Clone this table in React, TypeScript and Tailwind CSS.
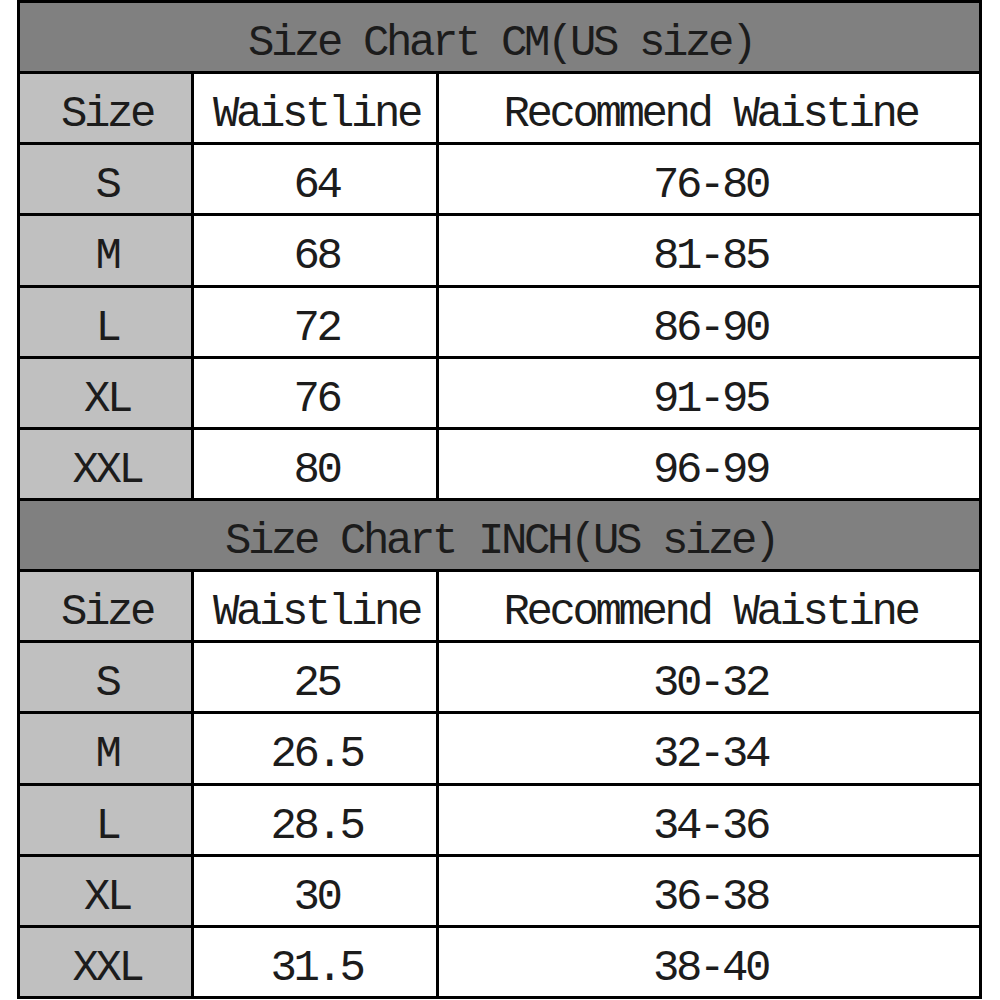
import React from "react";

type Row = { size: string; waist: string; rec: string };

const cmRows: Row[] = [
  { size: "S", waist: "64", rec: "76-80" },
  { size: "M", waist: "68", rec: "81-85" },
  { size: "L", waist: "72", rec: "86-90" },
  { size: "XL", waist: "76", rec: "91-95" },
  { size: "XXL", waist: "80", rec: "96-99" },
];

const inchRows: Row[] = [
  { size: "S", waist: "25", rec: "30-32" },
  { size: "M", waist: "26.5", rec: "32-34" },
  { size: "L", waist: "28.5", rec: "34-36" },
  { size: "XL", waist: "30", rec: "36-38" },
  { size: "XXL", waist: "31.5", rec: "38-40" },
];

function Cell({ children, tone = "bg-white" }: { children: React.ReactNode; tone?: string }) {
  return (
    <div className={`flex items-center justify-center pt-3 ${tone}`}>
      <span className="pl-[3px]">{children}</span>
    </div>
  );
}

function Section({ title, rows }: { title: string; rows: Row[] }) {
  return (
    <>
      <div className="col-span-3 flex items-center justify-center bg-[#808080] pt-3">
        <span className="pl-[3px]">{title}</span>
      </div>

      <Cell tone="bg-[#c0c0c0]">Size</Cell>
      <Cell>Waistline</Cell>
      <Cell>Recommend Waistine</Cell>

      {rows.map((r) => (
        <React.Fragment key={r.size}>
          <Cell tone="bg-[#c0c0c0]">{r.size}</Cell>
          <Cell>{r.waist}</Cell>
          <Cell>{r.rec}</Cell>
        </React.Fragment>
      ))}
    </>
  );
}

export default function App() {
  return (
    <div className="w-[1000px] h-[1000px] bg-white font-['Liberation_Mono','DejaVu_Sans_Mono',monospace]">
      <div className="ml-[17px] w-[965px] h-[999px] grid grid-cols-[171px_242px_540px] grid-rows-[repeat(14,1fr)] gap-[3px] p-[3px] bg-black text-[44px] tracking-[-3.4px] text-[#1c1c1c] leading-none">
        <Section title="Size Chart CM(US size)" rows={cmRows} />
        <Section title="Size Chart INCH(US size)" rows={inchRows} />
      </div>
    </div>
  );
}
